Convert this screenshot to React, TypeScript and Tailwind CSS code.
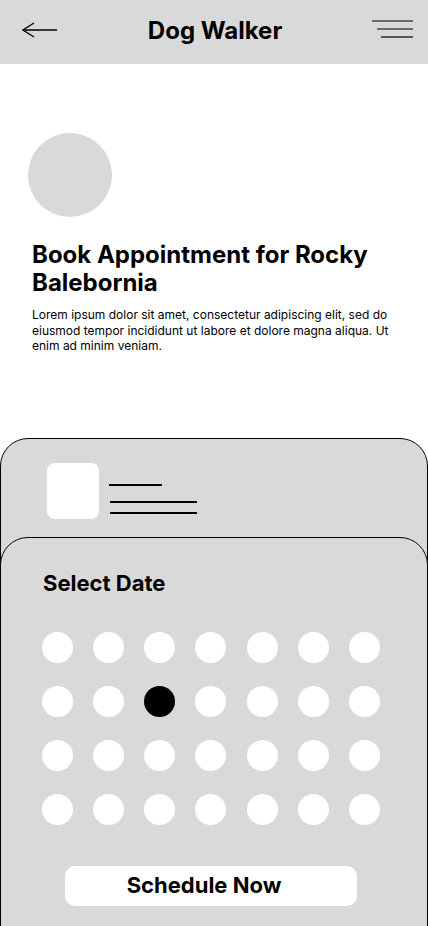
import React from 'react';

const SELECTED = 9; // second row, third day

const BackArrow = () => (
  <svg width="36" height="16" viewBox="0 0 36 16" fill="none" stroke="black" strokeWidth={1.3}>
    <path d="M1 8 H35" />
    <path d="M12 1 L1 8 L12 15" />
  </svg>
);

const MenuIcon = () => (
  <svg width="42" height="18" viewBox="0 0 42 18" fill="none" stroke="black" strokeWidth={1.2}>
    <path d="M0 1 H41" />
    <path d="M5 9 H41" />
    <path d="M9 17 H41" />
  </svg>
);

const App: React.FC = () => {
  const days = Array.from({ length: 28 }, (_, i) => i);

  return (
    <div className="w-[428px] h-[926px] overflow-hidden bg-white text-black font-['Inter',sans-serif]">
      {/* header */}
      <header className="h-16 bg-[#d9d9d9] grid grid-cols-[1fr_auto_1fr] items-center pl-[22px] pr-[14px]">
        <div className="flex mb-[4px]">
          <BackArrow />
        </div>
        <h1 className="text-[24px] font-bold leading-none mb-[2px] mr-[6px]">Dog Walker</h1>
        <div className="flex justify-end mb-[6px]">
          <MenuIcon />
        </div>
      </header>

      {/* pet info */}
      <section className="px-8 pt-[69px]">
        <div className="w-[84px] h-[84px] rounded-full bg-[#d9d9d9] -ml-1" />
        <h2 className="mt-[24px] text-[24px] leading-[28px] font-bold">Book Appointment for Rocky Balebornia</h2>
        <p className="mt-[10px] text-[12px] leading-[15.5px]">
          Lorem ipsum dolor sit amet, consectetur adipiscing elit, sed do eiusmod tempor incididunt ut labore et dolore magna aliqua. Ut enim ad minim veniam.
        </p>
      </section>

      {/* cards */}
      <div className="mt-[84px] border border-black rounded-t-[28px] bg-[#d9d9d9] pt-[24px]">
        <div className="flex ml-[46px]">
          <div className="w-[52px] h-[56px] rounded-[8px] bg-white" />
          <div className="ml-[10px] pt-[21px] flex flex-col">
            <div className="w-[53px] h-[2px] bg-black" />
            <div className="ml-px mt-[15px] w-[87px] h-[2px] bg-black" />
            <div className="ml-px mt-[9px] w-[87px] h-[2px] bg-black" />
          </div>
        </div>

        <div className="-mx-px mt-[18px] border border-black rounded-t-[28px] bg-[#d9d9d9] pt-[31px] pb-10">
          <h3 className="ml-[42px] text-[22px] leading-[28px] font-bold">Select Date</h3>
          <div className="mt-[35px] ml-[41px] w-[338px] grid grid-cols-[repeat(7,31px)] justify-between gap-y-[23px]">
            {days.map((d) => (
              <div
                key={d}
                className={
                  d === SELECTED
                    ? 'w-[31px] h-[31px] rounded-full bg-black'
                    : 'w-[31px] h-[31px] rounded-full bg-white'
                }
              />
            ))}
          </div>
          <div className="mt-[41px] flex justify-center pr-[6px]">
            <button className="w-[292px] h-10 rounded-[10px] bg-white text-[22px] font-bold pr-[14px]">
              Schedule Now
            </button>
          </div>
        </div>
      </div>
    </div>
  );
};

export default App;
